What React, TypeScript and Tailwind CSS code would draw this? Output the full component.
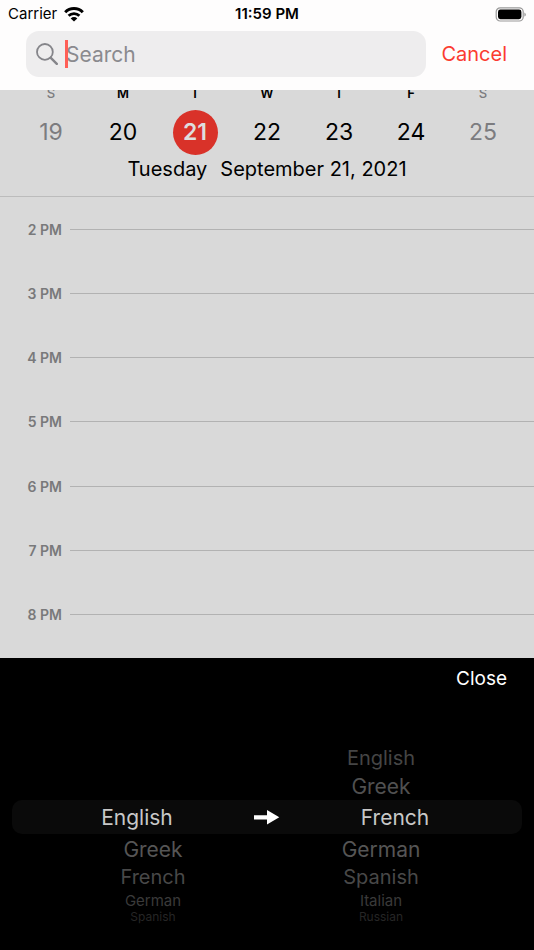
import { useState } from "react";
import clsx from "clsx";

const days = [
  { letter: "S", date: 19, weekend: true },
  { letter: "M", date: 20 },
  { letter: "T", date: 21 },
  { letter: "W", date: 22 },
  { letter: "T", date: 23 },
  { letter: "F", date: 24 },
  { letter: "S", date: 25, weekend: true },
];

const hours = ["2 PM", "3 PM", "4 PM", "5 PM", "6 PM", "7 PM", "8 PM"];

const sourceLanguages = ["English", "Greek", "French", "German", "Spanish"];
const targetLanguages = ["English", "Greek", "French", "German", "Spanish", "Italian", "Russian"];

// row looks by distance from the selected row of the wheel
const wheelRows: Record<string, string> = {
  "-2": "h-7 text-[20px] text-[#454545]",
  "-1": "h-7 text-[21px] text-[#505050]",
  "0": "h-[34px] text-[21px] text-[#c8c8c8]",
  "1": "h-[30px] text-[21px] text-[#555555]",
  "2": "h-[26px] text-[20px] text-[#484848]",
  "3": "h-5 text-[15px] text-[#3a3a3a]",
  "4": "h-[14px] text-[12px] text-[#262626]",
};

const StatusBar = () => (
  <div className="flex h-[31px] items-center px-2 pb-[3px]">
    <div className="flex flex-1 items-center gap-[7px] text-[15px]">
      <span>Carrier</span>
      <svg className="h-[15px] w-5" viewBox="0 0 20 15" aria-hidden="true">
        <path d="M1.2 5.2a12.4 12.4 0 0 1 17.6 0" fill="none" stroke="black" strokeWidth="3" />
        <path d="M4.6 8.8a7.6 7.6 0 0 1 10.8 0" fill="none" stroke="black" strokeWidth="2.8" />
        <path d="M10 14.6 6.7 11.4a4.7 4.7 0 0 1 6.6 0z" fill="black" />
      </svg>
    </div>
    <span className="text-[15px] font-semibold">11:59 PM</span>
    <div className="flex flex-1 justify-end">
      <svg className="h-[15px] w-8" viewBox="0 0 32 15" aria-hidden="true">
        <rect x="2.2" y="0.8" width="27" height="13.2" rx="4" fill="none" stroke="#999" strokeWidth="1.2" />
        <rect x="4" y="2.6" width="23.4" height="9.6" rx="2.4" fill="black" />
        <path d="M30.4 5.4c1.9.8 1.9 3.4 0 4.2z" fill="#999" />
      </svg>
    </div>
  </div>
);

const SearchBar = () => (
  <div className="flex items-center pr-[27px] pb-[13px] pl-[26px]">
    <label className="relative flex h-[46px] flex-1 items-center rounded-[13px] bg-[#eeedee] pl-[10px]">
      <svg className="h-[22px] w-[22px] shrink-0" viewBox="0 0 22 22" fill="none" stroke="#85858a" aria-hidden="true">
        <circle cx="8.9" cy="8.9" r="7.9" strokeWidth="1.8" />
        <path d="m14.8 14.8 6 6" strokeWidth="2.4" strokeLinecap="round" />
      </svg>
      <input
        type="text"
        aria-label="Search"
        placeholder="Search"
        className="ml-2 w-0 flex-1 bg-transparent pt-[2px] text-[21px] outline-none placeholder:text-[#8a8a8e]"
      />
      <span className="absolute left-[39px] h-7 w-[3px] bg-[#ff5f57]" />
    </label>
    <button className="ml-[15px] text-[20px] text-[#fb3b30]">Cancel</button>
  </div>
);

const Wheel = ({ languages, selected, side }: { languages: string[]; selected: string; side: "left" | "right" }) => {
  const selectedIndex = languages.indexOf(selected);
  return (
    <ul role="listbox" aria-label={side === "left" ? "From" : "To"} className={clsx("flex-1", side === "left" && "pt-14")}>
      {languages.map((language, index) => (
        <li
          key={language}
          role="option"
          aria-selected={index === selectedIndex}
          className={clsx(
            "flex items-center justify-center leading-none",
            wheelRows[index - selectedIndex],
            index === selectedIndex && (side === "left" ? "pr-8" : "pl-7")
          )}
        >
          {language}
        </li>
      ))}
    </ul>
  );
};

export default function App() {
  const [selectedDate, setSelectedDate] = useState(21);

  return (
    <div className="flex min-h-screen flex-col bg-[#d9d9d9] font-[Inter,'Liberation_Sans',sans-serif] text-black">
      <header className="relative z-10 bg-[#fefdfd]">
        <StatusBar />
        <SearchBar />
      </header>

      <main className="flex flex-1 flex-col">
        <section className="border-b border-[#bcbcbc] pb-3">
          <div className="-mt-1 grid grid-cols-7 px-[15px]">
            {days.map((day) => (
              <div key={day.date} className={clsx("flex flex-col items-center", day.weekend && "text-[#7c7c7f]")}>
                <span className={clsx("h-6 text-[13px] leading-[14px]", day.weekend ? "font-medium" : "font-semibold")}>{day.letter}</span>
                <button
                  className={clsx(
                    "h-[45px] w-[45px] rounded-full text-[23px]",
                    day.date === selectedDate && "bg-[#d93229] font-semibold text-[#dedede]"
                  )}
                  onClick={() => setSelectedDate(day.date)}
                >
                  {day.date}
                </button>
              </div>
            ))}
          </div>
          <p className="flex justify-center gap-[13px] text-[20px] leading-[29px]">
            <span>Tuesday</span>
            <span>September 21, 2021</span>
          </p>
        </section>

        <section className="flex flex-1 flex-col pb-[11px]">
          {hours.map((hour) => (
            <div key={hour} className="flex flex-1 items-center gap-2">
              <span className="w-[62px] text-right text-[14px] font-semibold text-[#79797b]">{hour}</span>
              <div className="h-px flex-1 bg-[#b2b2b2]" />
            </div>
          ))}
        </section>
      </main>

      <footer className="bg-black pb-[26px]">
        <div className="flex h-[86px] items-start justify-end pt-[7px] pr-[27px]">
          <button className="text-[19px] text-white">Close</button>
        </div>
        <div className="relative flex px-[39px]">
          <div className="absolute inset-x-3 top-14 flex h-[34px] items-center justify-center rounded-[10px] bg-[#0a0a0a]">
            <svg className="h-[15px] w-[26px]" viewBox="0 0 26 15" fill="white" aria-hidden="true">
              <path d="M0 5.2h13V0l12.3 7.2L13 14.4V9.4H0z" />
            </svg>
          </div>
          <div className="relative flex flex-1">
            <Wheel languages={sourceLanguages} selected="English" side="left" />
            <Wheel languages={targetLanguages} selected="French" side="right" />
          </div>
        </div>
      </footer>
    </div>
  );
}
